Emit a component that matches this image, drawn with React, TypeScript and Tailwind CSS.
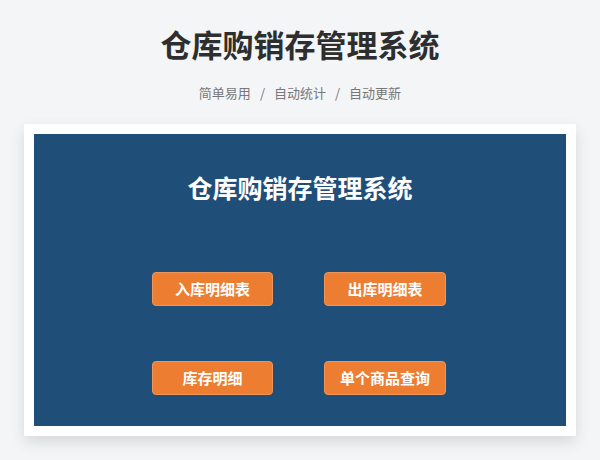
const buttons = ['入库明细表', '出库明细表', '库存明细', '单个商品查询']

const App = () => {
  return (
    <div
      className="w-[600px] h-[460px] bg-[#f4f5f7] overflow-hidden"
      style={{ fontFamily: '"Noto Sans CJK SC", "Noto Sans", sans-serif' }}
    >
      <h1 className="pt-[24px] text-center text-[31px] leading-[40px] font-bold text-[#2e2e2e]">
        仓库购销存管理系统
      </h1>
      <p className="mt-[19px] flex justify-center text-[13px] leading-[20px] text-[#777777]">
        <span>简单易用</span>
        <span className="mx-[9px]">/</span>
        <span>自动统计</span>
        <span className="mx-[9px]">/</span>
        <span>自动更新</span>
      </p>

      <div className="mx-auto mt-[21px] w-[552px] bg-white p-[10px] shadow-[0_6px_14px_rgba(0,0,0,0.12)]">
        <div className="bg-[#1f4e78] pt-[36px] pb-[31px]">
          <h2 className="text-center text-[25px] leading-[34px] font-bold text-white">
            仓库购销存管理系统
          </h2>
          <div className="mt-[68px] grid grid-cols-[121px_122px] justify-center gap-x-[51px] gap-y-[55px] pr-[2px]">
            {buttons.map((b) => (
              <button
                key={b}
                className="h-[34px] rounded-[4px] border border-[#f0955a] bg-[#ed7d31] text-[15px] font-bold text-white"
              >
                {b}
              </button>
            ))}
          </div>
        </div>
      </div>
    </div>
  )
}

export default App
